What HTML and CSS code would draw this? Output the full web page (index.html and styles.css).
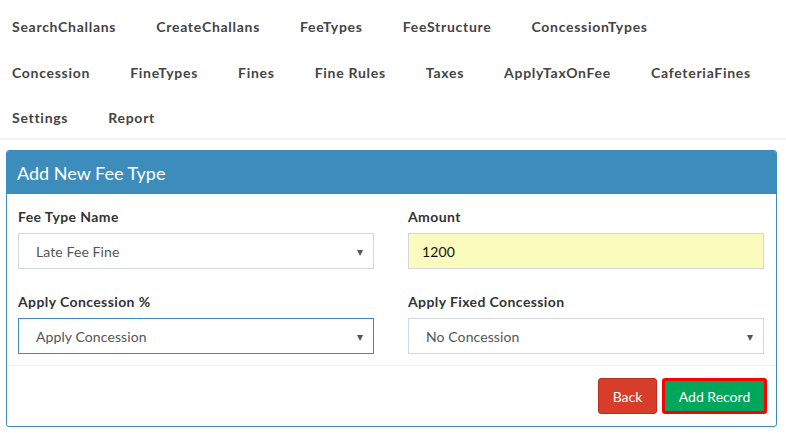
FILE: index.html
```html
<!DOCTYPE html>
<html>
<head>
<meta charset="utf-8">
<link rel="stylesheet" href="styles.css">
</head>
<body>
<nav class="topnav">
  <ul class="nav-row">
    <li>SearchChallans</li>
    <li>CreateChallans</li>
    <li>FeeTypes</li>
    <li>FeeStructure</li>
    <li>ConcessionTypes</li>
  </ul>
  <ul class="nav-row">
    <li>Concession</li>
    <li>FineTypes</li>
    <li>Fines</li>
    <li>Fine Rules</li>
    <li>Taxes</li>
    <li>ApplyTaxOnFee</li>
    <li>CafeteriaFines</li>
  </ul>
  <ul class="nav-row">
    <li>Settings</li>
    <li>Report</li>
  </ul>
</nav>
<div class="content">
  <div class="panel">
    <div class="panel-head">Add New Fee Type</div>
    <div class="panel-body">
      <div class="field">
        <label>Fee Type Name</label>
        <div class="control select"><span>Late Fee Fine</span><span class="caret">&#9662;</span></div>
      </div>
      <div class="field">
        <label>Amount</label>
        <div class="control autofill"><span>1200</span></div>
      </div>
      <div class="field">
        <label>Apply Concession %</label>
        <div class="control select focus"><span>Apply Concession</span><span class="caret">&#9662;</span></div>
      </div>
      <div class="field">
        <label>Apply Fixed Concession</label>
        <div class="control select"><span>No Concession</span><span class="caret">&#9662;</span></div>
      </div>
    </div>
    <div class="panel-foot">
      <button class="btn btn-back">Back</button>
      <button class="btn btn-add">Add Record</button>
    </div>
  </div>
</div>
</body>
</html>
```

FILE: styles.css
```css
* { box-sizing: border-box; }
html, body { margin: 0; padding: 0; background: #fff; }
body { font-family: "Lato", "Open Sans", sans-serif; color: #333; font-size: 14px; }

.topnav { border-bottom: 2px solid #f1f1f1; padding: 3px 0 0 12px; }
.nav-row { list-style: none; margin: 0; padding: 0; display: flex; gap: 40px; height: 46px; align-items: center; }
.nav-row:last-child { height: 43px; align-items: flex-start; padding-top: 14px; }
.nav-row li { font-weight: 700; font-size: 14px; color: #444; letter-spacing: 0.72px; }

.content { padding: 10px 9px 0 6px; }
.panel { border: 1px solid #3c8dbc; border-radius: 3px; overflow: hidden; }
.panel-head { background: #3c8dbc; color: #fff; font-size: 18px; height: 43px; display: flex; align-items: center; padding-left: 10px; }
.panel-body { display: grid; grid-template-columns: 1fr 1fr; column-gap: 34px; row-gap: 25px; padding: 15px 12px 11px 11px; }
.field label { display: block; font-weight: 700; font-size: 14px; color: #333; margin-bottom: 8px; height: 16px; line-height: 16px; letter-spacing: 0.4px; }
.control { height: 36px; border: 1px solid #d2d6de; display: flex; align-items: center; justify-content: space-between; padding: 0 10px 0 17px; font-size: 14px; color: #555; letter-spacing: 0.1px; }
.control.focus { border-color: #3c8dbc; }
.control.autofill { background: #fafbbd; color: #111; padding-left: 13px; }
.caret { font-size: 12px; color: #555; }
.panel-foot { border-top: 1px solid #f4f4f4; display: flex; justify-content: flex-end; gap: 5px; padding: 12px 9px 12px 0; }
.btn { font-family: inherit; font-size: 14px; height: 36px; color: #fff; border-radius: 3px; cursor: pointer; }
.btn-back { background: #d73d28; border: 1px solid #b8301f; width: 59px; }
.btn-add { background: #00a65a; border: 3px solid #f00; width: 105px; }
```
